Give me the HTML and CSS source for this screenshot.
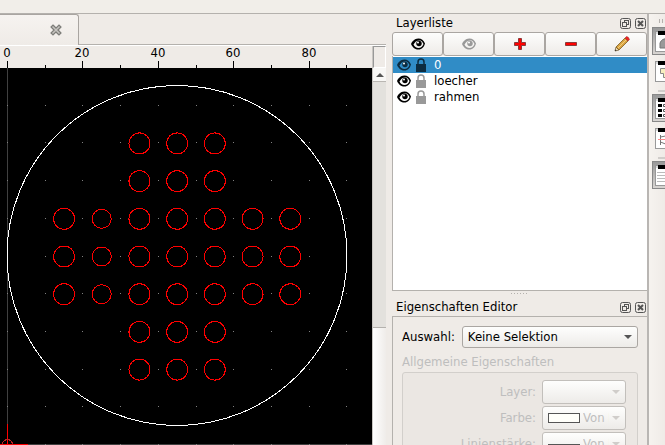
FILE: index.html
```
<!DOCTYPE html>
<html lang="de">
<head>
    <meta charset="UTF-8">
    <meta name="viewport" content="width=device-width, initial-scale=1.0">
    <title>CAD Zeichnung</title>
    <link rel="stylesheet" href="styles.css">
</head>
<body>
    <svg class="sprites" width="0" height="0">
        <symbol id="eye" viewBox="0 0 14 12">
            <path fill-rule="evenodd" fill="currentColor" d="M0 6L1 4C3 1.500 5 .5 7.500 .5c3 0 5 1.500 6.500 5C13 9 11 11.500 7.500 11.500 4 11.500 2 10 0 6zM2.500 6.500c1 2.200 2.700 3.500 5 3.500S11.500 8.700 12.500 6C11.500 4 10.500 2.800 9.500 2.500 5.500 2.300 4 4 2.500 6.500z"/>
            <circle cx="8" cy="5.500" r="2.700" fill="currentColor"/>
            <circle cx="7" cy="4.500" r="1" fill="#fff"/>
        </symbol>
        <symbol id="lock" viewBox="0 0 12 14">
            <path d="M3 7V4a3 3 0 0 1 6 0v3" fill="none" stroke="currentColor" stroke-width="1.500"/>
            <rect x="1" y="6" width="10" height="8" fill="currentColor"/>
        </symbol>
        <symbol id="float" viewBox="0 0 11 11">
            <rect x="0.500" y="0.500" width="10" height="10" rx="2" fill="none" stroke="#555"/>
            <rect x="4.500" y="2.500" width="4" height="4" fill="none" stroke="#555"/>
            <rect x="2.500" y="4.500" width="4" height="4" fill="#efebe7" stroke="#555"/>
        </symbol>
        <symbol id="close" viewBox="0 0 11 11">
            <rect x="0.500" y="0.500" width="10" height="10" rx="2" fill="none" stroke="#555"/>
            <path d="M3 3l5 5M8 3l-5 5" stroke="#555" stroke-width="2"/>
        </symbol>
        <symbol id="dock-frame" viewBox="0 0 22 21">
            <rect x="0.500" y="0.500" width="24" height="20" fill="#fff" stroke="#999"/>
            <path d="M3 0h19v4H3z"/>
            <path d="M1 1h2v2H1z" fill="#ddd"/>
        </symbol>
    </svg>

    <div class="toolbar-edge"></div>
    <div class="window">
        <main class="drawing">
            <div class="tabs">
                <div class="tab">
                    <button class="tab-close" aria-label="Schließen">
                        <svg width="12" height="12" viewBox="0 0 12 12">
                            <path d="M3 3l6 6M9 3l-6 6" stroke="#7d7d79" stroke-width="4" stroke-linecap="square"/>
                            <path d="M3 3l6 6M9 3l-6 6" stroke="#c6c4c0" stroke-width="1.500" stroke-linecap="square"/>
                        </svg>
                    </button>
                </div>
            </div>
            <div class="view">
                <div class="sheet">
                    <svg class="ruler" height="22" id="ruler"></svg>
                    <svg class="canvas" id="canvas"></svg>
                </div>
                <div class="scroll">
                    <div class="corner"></div>
                    <button class="scroll-up" aria-label="Nach oben">
                        <svg width="8" height="4"><path d="M0 4l4-4 4 4z" fill="#555"/></svg>
                    </button>
                    <div class="groove"></div>
                    <div class="handle"></div>
                </div>
            </div>
        </main>

        <aside class="docks">
            <section class="layers">
                <header class="dock-title">
                    <h2>Layerliste</h2>
                    <button aria-label="Abdocken"><svg width="11" height="11"><use href="#float"/></svg></button>
                    <button aria-label="Schließen"><svg width="11" height="11"><use href="#close"/></svg></button>
                </header>
                <div class="layer-buttons">
                    <button aria-label="Alle Layer zeigen"><svg width="14" height="12"><use href="#eye"/></svg></button>
                    <button class="muted" aria-label="Alle Layer verstecken"><svg width="14" height="12"><use href="#eye"/></svg></button>
                    <button aria-label="Layer hinzufügen"><svg width="12" height="12"><path d="M4.500 .5h3v4h4v3h-4v4h-3v-4h-4v-3h4z" fill="#f00" stroke="#8b3a3a"/></svg></button>
                    <button aria-label="Layer entfernen"><svg width="12" height="12"><path d="M.5 4.500h11v3h-11z" fill="#f00" stroke="#8b3a3a"/></svg></button>
                    <button aria-label="Layer bearbeiten">
                        <svg width="16" height="16">
                            <path d="M1 15l1-4 3 3z" fill="#f3ddb3" stroke="#5e4a28" stroke-width=".7"/>
                            <path d="M2 11l9-9 3 3-9 9z" fill="#d9a441" stroke="#7a5a22" stroke-width=".8"/>
                            <path d="M4 12l8-8" stroke="#f4cf7c"/>
                            <path d="M11 2l1.500-1.500q2 0 3 3L14 5z" fill="#e22" stroke="#a33" stroke-width=".6"/>
                            <path d="M1 15l.5-1.500 1 1z" fill="#222"/>
                        </svg>
                    </button>
                </div>
                <ul class="layer-list">
                    <li class="selected"><svg width="14" height="12"><use href="#eye"/></svg><svg class="lock" width="12" height="14"><use href="#lock"/></svg>0</li>
                    <li><svg width="14" height="12"><use href="#eye"/></svg><svg class="lock" width="12" height="14"><use href="#lock"/></svg>loecher</li>
                    <li><svg width="14" height="12"><use href="#eye"/></svg><svg class="lock" width="12" height="14"><use href="#lock"/></svg>rahmen</li>
                </ul>
            </section>
            <div class="splitter"></div>
            <section class="properties">
                <header class="dock-title">
                    <h2>Eigenschaften Editor</h2>
                    <button aria-label="Abdocken"><svg width="11" height="11"><use href="#float"/></svg></button>
                    <button aria-label="Schließen"><svg width="11" height="11"><use href="#close"/></svg></button>
                </header>
                <div class="panel">
                    <div class="selection">
                        <label for="auswahl">Auswahl:</label>
                        <div class="combo">
                            <select id="auswahl"><option>Keine Selektion</option></select>
                        </div>
                    </div>
                    <fieldset disabled>
                        <legend>Allgemeine Eigenschaften</legend>
                        <div class="group">
                            <label for="layer">Layer:</label>
                            <div class="combo"><select id="layer"><option></option></select></div>
                            <label for="farbe">Farbe:</label>
                            <div class="combo"><i class="swatch"></i><select id="farbe"><option>Von Layer</option></select></div>
                            <label for="staerke">Linienstärke:</label>
                            <div class="combo"><i class="line"></i><select id="staerke"><option>Von Layer</option></select></div>
                        </div>
                    </fieldset>
                </div>
            </section>
        </aside>

        <nav class="tools">
            <div class="grip"></div>
            <button class="on" aria-label="Ansicht"><svg width="22" height="21"><use href="#dock-frame"/><path d="M5 17v-5q2-5 7-4v9z" fill="#999" stroke="#777"/></svg></button>
            <button aria-label="Blöcke"><svg width="22" height="21"><use href="#dock-frame"/><path d="M5.500 7.500h6v5h4v4h-7v-4h-3z" fill="#f7efbf" stroke="#888"/></svg></button>
            <hr>
            <button class="on" aria-label="Layerliste"><svg width="22" height="21"><use href="#dock-frame"/><path d="M3 6h4v3H3zM3 11h4v3H3zM3 16h4v3H3z"/><path d="M8.500 6.500h3v2h-3zM8.500 11.500h3v2h-3zM8.500 16.500h3v2h-3z" fill="none" stroke="#555"/></svg></button>
            <button aria-label="Bibliothek"><svg width="22" height="21"><use href="#dock-frame"/><path d="M5.500 7v10M5.500 9l5-1v8l-5-2" fill="none" stroke="#777"/><path d="M3 11.500h8" stroke="#f88"/></svg></button>
            <hr>
            <button class="on" aria-label="Eigenschaften Editor"><svg width="22" height="21"><use href="#dock-frame"/><path d="M2 7.500h10M2 10.500h10M2 13.500h10M2 16.500h10" stroke="#bbb"/></svg></button>
        </nav>
    </div>
    <script src="drawing.js"></script>
</body>
</html>
```

FILE: styles.css
```
* {
    box-sizing: border-box;
}
body {
    margin: 0;
    height: 100vh;
    display: flex;
    flex-direction: column;
    overflow: hidden;
    background: #efebe7;
    color: #000;
    font-family: "DejaVu Sans Condensed", "DejaVu Sans", sans-serif;
    font-stretch: condensed;
    font-size: 13px;
    line-height: 16px;
}
button, select {
    font: inherit;
    color: inherit;
    margin: 0;
    padding: 0;
    border: 0;
    background: none;
}
svg {
    display: block;
    flex: none;
}
.sprites {
    position: absolute;
}
.toolbar-edge {
    flex: none;
    height: 14px;
    background: #f1eee9;
    border-bottom: 1px solid #b4b1ad;
}
.window {
    flex: 1;
    min-height: 0;
    display: flex;
}

/* drawing area */
.drawing {
    flex: 1;
    min-width: 0;
    display: flex;
    flex-direction: column;
}
.tabs {
    flex: none;
    height: 31px;
    border-bottom: 1px solid #b4b1ad;
}
.tab {
    width: 79px;
    height: 31px;
    display: flex;
    align-items: center;
    justify-content: flex-end;
    padding-right: 16px;
    border: 1px solid #a9a5a1;
    border-width: 1px 1px 0 0;
    border-radius: 0 3px 0 0;
    background: linear-gradient(#f6f3f0, #efebe7);
}
.view {
    flex: 1;
    min-height: 0;
    display: flex;
    border-top: 1px solid #fff;
}
.sheet {
    flex: 1;
    min-width: 0;
    display: flex;
    flex-direction: column;
}
.ruler {
    width: 100%;
    font-size: 13px;
}
.canvas {
    flex: 1;
    width: 100%;
    min-height: 0;
    background: #000;
}
.scroll {
    flex: none;
    width: 14px;
    display: flex;
    flex-direction: column;
    border-left: 1px solid #c9c6c2;
}
.corner {
    height: 22px;
    border: 1px solid #fff;
    border-top-color: #999;
    border-left-color: #999;
}
.scroll-up {
    height: 14px;
    display: flex;
    align-items: center;
    justify-content: center;
    background: #f8f7f5;
    border-bottom: 1px solid #b9b6b2;
}
.groove {
    flex: 246;
    background: #e3e1dd;
}
.handle {
    flex: 117;
    border-top: 1px solid #b4b1ad;
    background: linear-gradient(90deg, #fff, #efece9);
}

/* docks */
.docks {
    flex: none;
    width: 263px;
    padding-left: 6px;
    display: flex;
    flex-direction: column;
    border-right: 2px solid #b9b6b3;
}
.dock-title {
    height: 18px;
    display: flex;
    align-items: center;
    gap: 4px;
    padding: 0 1px 0 4px;
}
.dock-title h2 {
    flex: 1;
    margin: 0;
    font-size: 13px;
    font-weight: normal;
}
.layer-buttons {
    display: flex;
    height: 24px;
}
.layer-buttons button {
    flex: 1;
    display: flex;
    align-items: center;
    justify-content: center;
    border: 1px solid #aaa6a2;
    border-radius: 3px;
    background: linear-gradient(#fdfdfc, #eeebe8);
}
.layer-buttons .muted {
    color: #999;
}
.layer-list {
    height: 235px;
    margin: 0;
    padding: 1px 0 0;
    list-style: none;
    background: #fff;
    border: 1px solid #b4b1ad;
    border-width: 0 0 1px 1px;
}
.layer-list li {
    height: 16px;
    display: flex;
    align-items: center;
    gap: 4px;
    padding-left: 4px;
}
.layer-list .lock {
    margin-right: 3px;
    color: #999;
}
.layer-list .selected {
    background: #308cc6;
    color: #fff;
}
.layer-list .selected svg {
    color: #0c2c40;
}
.splitter {
    width: 18px;
    height: 7px;
    margin: 0 auto;
    background: repeating-linear-gradient(90deg, #b4b1ad 0 1px, transparent 1px 3px) 0 2px / 100% 1px no-repeat;
}
.properties {
    flex: 1;
    min-height: 0;
    display: flex;
    flex-direction: column;
}
.panel {
    flex: 1;
    min-height: 0;
    padding: 9px 9px 0;
    border: 1px solid #b4b1ad;
    border-width: 1px 0 0 1px;
}
.selection {
    display: flex;
    align-items: center;
    gap: 7px;
}
.selection .combo {
    flex: 1;
    height: 22px;
}
.combo {
    display: flex;
    align-items: center;
    gap: 3px;
    height: 24px;
    padding: 0 5px;
    border: 1px solid #aaa6a2;
    border-radius: 3px;
    background: linear-gradient(#fefefd, #edebe8);
}
.combo select {
    flex: 1;
    min-width: 0;
    appearance: none;
    opacity: 1;
}
.combo::after {
    content: "";
    border: 4px solid transparent;
    border-top-color: #555;
    border-bottom: 0;
}
fieldset {
    margin: 6px 0 0;
    padding: 0;
    border: 0;
    min-width: 0;
    color: #bebebe;
}
legend {
    padding: 0;
}
.group {
    display: grid;
    grid-template-columns: 1fr 84px;
    gap: 2px 6px;
    align-items: center;
    margin-top: 2px;
    padding: 7px 11px 8px;
    border: 1px solid #d2cfcb;
    border-radius: 3px;
    background: #ebe7e3;
}
.group label {
    text-align: right;
}
.group .combo {
    border-color: #c2bfbb;
}
.group .combo::after {
    border-top-color: #d0cdca;
}
.swatch, .line {
    flex: none;
    width: 32px;
    height: 10px;
    border: 1px solid #555;
    background: #fffffa;
}
.line {
    height: 1px;
    border-bottom: 0;
}

/* right toolbar */
.tools {
    flex: none;
    width: 16px;
    padding: 5px 0 0 3px;
    overflow: hidden;
    background: linear-gradient(90deg, #f6f3ef, #efebe7);
}
.tools button {
    display: block;
    width: 28px;
    height: 28px;
    margin-bottom: 2px;
    padding: 2px;
    border: 1px solid transparent;
}
.tools .on {
    border-color: #888;
    background: linear-gradient(#999, #d8d5d2);
}
.tools hr {
    height: 2px;
    margin: 5px 0 2px 6px;
    border: 0;
    background: #d0cdca;
}
.grip {
    width: 12px;
    height: 8px;
    margin-left: 7px;
    background: repeating-linear-gradient(90deg, #b4b1ad 0 1px, transparent 1px 3px);
    background-repeat: repeat-y;
    background-size: 100% 1px;
    border-bottom: 4px solid #f3f0ec;
}
```

FILE: drawing.js
```
const NS = 'http://www.w3.org/2000/svg';
const canvas = document.getElementById('canvas');
const ruler = document.getElementById('ruler');
const originX = 7.5, originY = 376.5, step = 37.7;

function add(parent, tag, attrs, text) {
    const el = document.createElementNS(NS, tag);
    for (const key in attrs) el.setAttribute(key, attrs[key]);
    if (text) el.textContent = text;
    parent.appendChild(el);
}

// ruler
for (let i = 0; i < 10; i++) {
    const x = Math.floor(originX + i * step);
    const major = i % 2 === 0;
    add(ruler, 'rect', { x: x, y: major ? 15 : 19, width: 1, height: 7 });
    if (major) add(ruler, 'text', { x: x, y: 11, 'text-anchor': 'middle' }, String(i * 10));
}

// axes and grid
add(canvas, 'path', { d: 'M7.5 0V376M0 376.5H372', stroke: '#404040' });
for (let i = 0; i < 10; i++) {
    for (let j = 0; j < 10; j++) {
        add(canvas, 'rect', { x: Math.floor(originX + i * step), y: Math.floor(originY - j * step), width: 1, height: 1, fill: '#808080' });
    }
}

// plate and holes
const shapes = { fill: 'none', 'shape-rendering': 'crispEdges' };
add(canvas, 'circle', { ...shapes, cx: 177, cy: 187.5, r: 170, stroke: '#fff' });
for (let row = 0; row < 7; row++) {
    for (let col = 0; col < 7; col++) {
        if ((row < 2 || row > 4) && (col < 2 || col > 4)) continue;
        add(canvas, 'circle', { ...shapes, cx: originX + (col + 1.5) * step, cy: originY - (8 - row) * step + 0.5, r: col === 1 ? 9.5 : 10.5, stroke: '#f00' });
    }
}

// origin marker
add(canvas, 'path', { d: 'M7.500 356V377M0 376.500H28', stroke: '#f00', fill: 'none' });
add(canvas, 'circle', { ...shapes, cx: 7.5, cy: 376.5, r: 5, stroke: '#b22' });
```
